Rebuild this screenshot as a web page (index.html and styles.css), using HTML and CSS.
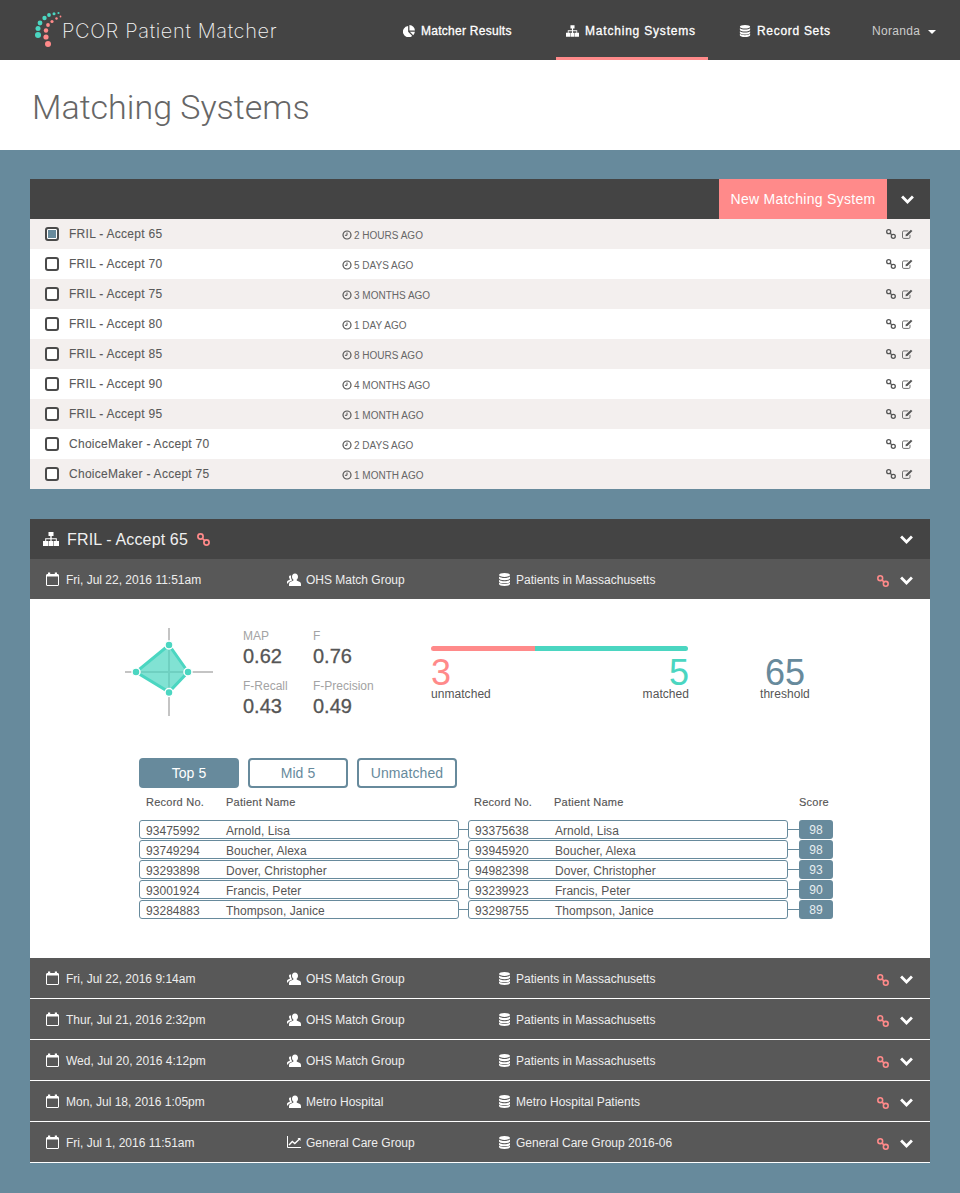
FILE: index.html
```html
<!DOCTYPE html>
<html lang="en">
<head>
<meta charset="utf-8">
<title>Matching Systems</title>
<link rel="stylesheet" href="styles.css">
</head>
<body>
<svg class="defs" width="0" height="0" aria-hidden="true">
  <symbol id="i-sitemap" viewBox="0 0 16 14"><path fill="currentColor" d="M5.500 0h5v4H8.700v2.200h5.100V9H16v5h-5V9h1.800V7.200H8.600V9h1.900v5h-5V9h1.900V7.200H3.200V9H5v5H0V9h2.200V6.200h5.100V4H5.500z"/></symbol>
  <symbol id="i-pie" viewBox="0 0 14 14"><path fill="currentColor" d="M6 1.200V8l4.800 4.800A6.600 6.600 0 1 1 6 1.200zM7.500 0a6.500 6.500 0 0 1 6.400 6.500H7.500zM8 8h5.900a6.400 6.400 0 0 1-2 3.900z"/></symbol>
  <symbol id="i-db" viewBox="0 0 12 14"><g fill="currentColor"><path d="M6 0c3.300 0 6 .9 6 2.100S9.300 4.200 6 4.200 0 3.300 0 2.100 2.700 0 6 0z"/><path d="M0 3.700C1 4.800 3.500 5.300 6 5.300s5-.5 6-1.600v1.900C12 6.800 9.300 7.700 6 7.700S0 6.800 0 5.600z"/><path d="M0 7.200C1 8.300 3.500 8.800 6 8.800s5-.5 6-1.600v1.900c0 1.200-2.700 2.100-6 2.100S0 10.300 0 9.100z"/><path d="M0 10.300c1 1.100 3.500 1.600 6 1.600s5-.5 6-1.600v1.600C12 13.100 9.300 14 6 14s-6-.9-6-2.100z"/></g></symbol>
  <symbol id="i-link" viewBox="0 0 13 13"><g fill="none" stroke="currentColor" stroke-width="1.700"><circle cx="3.500" cy="3.500" r="2.600"/><circle cx="9.500" cy="9.500" r="2.600"/><path d="M5.500 5.500l2 2"/></g></symbol>
  <symbol id="i-edit" viewBox="0 0 13 12"><g fill="none" stroke="currentColor" stroke-width="1"><path d="M9.500 7v2.800a1.500 1.500 0 0 1-1.500 1.500H2a1.500 1.500 0 0 1-1.500-1.500V3.800A1.500 1.500 0 0 1 2 2.300h5.500"/></g><path fill="currentColor" d="M4.500 6.500L10.600.8l1.800 1.700-6 5.800-2.300.4z"/></symbol>
  <symbol id="i-clock" viewBox="0 0 10 10"><circle cx="5" cy="5" r="4" fill="none" stroke="currentColor" stroke-width="1.200"/><path d="M5 2.500V5.300H2.900" fill="none" stroke="currentColor" stroke-width="1"/></symbol>
  <symbol id="i-cal" viewBox="0 0 13 14"><rect x=".5" y="2.500" width="12" height="11" rx=".5" fill="none" stroke="currentColor"/><path fill="currentColor" d="M0 3h13v1.500H0zM2 .5h2.200v3.500H2zM8.800 .5H11v3.500H8.800z"/></symbol>
  <symbol id="i-users" viewBox="0 0 14 13"><path fill="currentColor" d="M8 .5c1.900 0 3 1.400 3 3.200 0 1.300-.6 2.500-1.400 3.100 0 .7.300 1 1 1.300C12.300 8.700 14 9.200 14 11v2H2v-1.800c0-2 1.900-2.600 3.500-3.100.8-.3 1-.6 1-1.300C5.600 6.200 5 5 5 3.700 5 1.900 6.100.5 8 .5zM3.800 2.600c.2 0 .3 0 .4.100-.1.400-.2.700-.2 1 0 1.300.5 2.600 1.200 3.500-.2.500-.7.700-1.300.9C2.500 8.600 1.300 9.300 1 10.500H0V9c0-1.200 1.200-1.600 2.300-2 .5-.2.700-.4.700-.9-.6-.5-1-1.300-1-2.100 0-.9.600-1.400 1.800-1.400z"/></symbol>
  <symbol id="i-chart" viewBox="0 0 14 12"><path fill="none" stroke="currentColor" d="M.5 0v11.500H14"/><path fill="none" stroke="currentColor" stroke-width="1.400" d="M2 9l3.300-3.500 2.500 2L12.500 3"/><path fill="currentColor" d="M10.500 2H13.500V5z"/></symbol>
  <symbol id="i-chev" viewBox="0 0 12 8"><path fill="none" stroke="currentColor" stroke-width="2.600" d="M1 1.200l5 5 5-5"/></symbol>
</svg>

<header class="topbar">
  <a class="brand">
    <svg class="logo" viewBox="0 0 30 36" width="30" height="36">
      <g fill="#4bd6c1"><circle cx="4" cy="23" r="3"/><circle cx="4" cy="16.500" r="2.500"/><circle cx="6" cy="11" r="2.400"/><circle cx="10.500" cy="6" r="2.200"/><circle cx="15" cy="3" r="1.900"/><circle cx="20" cy="1.700" r="1.500"/><circle cx="24.500" cy="1" r="1.100"/></g>
      <g fill="#ff8a8a"><circle cx="14" cy="32" r="3"/><circle cx="12" cy="25" r="2.600"/><circle cx="12" cy="18.500" r="2.200"/><circle cx="14" cy="13" r="1.900"/><circle cx="18" cy="9.500" r="1.600"/><circle cx="22.500" cy="6.500" r="1.200"/><circle cx="26.500" cy="4.500" r=".9"/></g>
    </svg>
    <span class="brand-name">PCOR Patient Matcher</span>
  </a>
  <nav class="nav">
    <a class="nav-item nav-results"><svg class="ico-nav"><use href="#i-pie"/></svg>Matcher Results</a>
    <a class="nav-item nav-systems active"><svg class="ico-nav"><use href="#i-sitemap"/></svg>Matching Systems</a>
    <a class="nav-item nav-records"><svg class="ico-nav"><use href="#i-db"/></svg>Record Sets</a>
    <a class="nav-user">Noranda<span class="caret"></span></a>
  </nav>
</header>

<section class="titleband"><h1>Matching Systems</h1></section>

<main class="content">
  <section class="panel">
    <div class="panel-head list-head">
      <button class="new-btn">New Matching System</button>
      <span class="chev-box"><svg class="ico-chev"><use href="#i-chev"/></svg></span>
    </div>
    <ul class="syslist">
      <li class="sys"><span class="check on"></span><span class="sys-name">FRIL - Accept 65</span><span class="sys-time"><svg class="ico-clock"><use href="#i-clock"/></svg>2 HOURS AGO</span><span class="sys-actions"><svg class="ico-link"><use href="#i-link"/></svg><svg class="ico-edit"><use href="#i-edit"/></svg></span></li>
      <li class="sys"><span class="check"></span><span class="sys-name">FRIL - Accept 70</span><span class="sys-time"><svg class="ico-clock"><use href="#i-clock"/></svg>5 DAYS AGO</span><span class="sys-actions"><svg class="ico-link"><use href="#i-link"/></svg><svg class="ico-edit"><use href="#i-edit"/></svg></span></li>
      <li class="sys"><span class="check"></span><span class="sys-name">FRIL - Accept 75</span><span class="sys-time"><svg class="ico-clock"><use href="#i-clock"/></svg>3 MONTHS AGO</span><span class="sys-actions"><svg class="ico-link"><use href="#i-link"/></svg><svg class="ico-edit"><use href="#i-edit"/></svg></span></li>
      <li class="sys"><span class="check"></span><span class="sys-name">FRIL - Accept 80</span><span class="sys-time"><svg class="ico-clock"><use href="#i-clock"/></svg>1 DAY AGO</span><span class="sys-actions"><svg class="ico-link"><use href="#i-link"/></svg><svg class="ico-edit"><use href="#i-edit"/></svg></span></li>
      <li class="sys"><span class="check"></span><span class="sys-name">FRIL - Accept 85</span><span class="sys-time"><svg class="ico-clock"><use href="#i-clock"/></svg>8 HOURS AGO</span><span class="sys-actions"><svg class="ico-link"><use href="#i-link"/></svg><svg class="ico-edit"><use href="#i-edit"/></svg></span></li>
      <li class="sys"><span class="check"></span><span class="sys-name">FRIL - Accept 90</span><span class="sys-time"><svg class="ico-clock"><use href="#i-clock"/></svg>4 MONTHS AGO</span><span class="sys-actions"><svg class="ico-link"><use href="#i-link"/></svg><svg class="ico-edit"><use href="#i-edit"/></svg></span></li>
      <li class="sys"><span class="check"></span><span class="sys-name">FRIL - Accept 95</span><span class="sys-time"><svg class="ico-clock"><use href="#i-clock"/></svg>1 MONTH AGO</span><span class="sys-actions"><svg class="ico-link"><use href="#i-link"/></svg><svg class="ico-edit"><use href="#i-edit"/></svg></span></li>
      <li class="sys"><span class="check"></span><span class="sys-name">ChoiceMaker - Accept 70</span><span class="sys-time"><svg class="ico-clock"><use href="#i-clock"/></svg>2 DAYS AGO</span><span class="sys-actions"><svg class="ico-link"><use href="#i-link"/></svg><svg class="ico-edit"><use href="#i-edit"/></svg></span></li>
      <li class="sys"><span class="check"></span><span class="sys-name">ChoiceMaker - Accept 75</span><span class="sys-time"><svg class="ico-clock"><use href="#i-clock"/></svg>1 MONTH AGO</span><span class="sys-actions"><svg class="ico-link"><use href="#i-link"/></svg><svg class="ico-edit"><use href="#i-edit"/></svg></span></li>
    </ul>
  </section>

  <section class="panel">
    <div class="panel-head detail-head">
      <svg class="ico-head"><use href="#i-sitemap"/></svg>
      <span class="head-title">FRIL - Accept 65</span>
      <svg class="ico-head-link"><use href="#i-link"/></svg>
      <svg class="ico-chev head-chev"><use href="#i-chev"/></svg>
    </div>

    <div class="run">
      <span class="run-date"><svg class="ico-cal"><use href="#i-cal"/></svg>Fri, Jul 22, 2016 11:51am</span>
      <span class="run-group"><svg class="ico-users"><use href="#i-users"/></svg>OHS Match Group</span>
      <span class="run-set"><svg class="ico-db"><use href="#i-db"/></svg>Patients in Massachusetts</span>
      <svg class="ico-run-link"><use href="#i-link"/></svg>
      <svg class="ico-chev run-chev"><use href="#i-chev"/></svg>
    </div>

    <div class="detail">
      <div class="summary">
        <svg class="radar" viewBox="0 0 90 90" width="90" height="90">
          <g stroke="#c4c4c4" stroke-width="2" fill="none"><path d="M44 0V88M0 44H88"/></g>
          <path d="M44 17L63 44L44 64L11 44Z" fill="#4bd6c1" fill-opacity=".7" stroke="#4bd6c1" stroke-width="3"/>
          <g fill="#4bd6c1" stroke="#fff" stroke-width="1.500"><circle cx="44" cy="17" r="4"/><circle cx="63" cy="44" r="4"/><circle cx="44" cy="64.500" r="4"/><circle cx="11" cy="44" r="4"/></g>
        </svg>
        <div class="metrics">
          <div class="metric"><span class="m-label">MAP</span><span class="m-value">0.62</span></div>
          <div class="metric"><span class="m-label">F</span><span class="m-value">0.76</span></div>
          <div class="metric"><span class="m-label">F-Recall</span><span class="m-value">0.43</span></div>
          <div class="metric"><span class="m-label">F-Precision</span><span class="m-value">0.49</span></div>
        </div>
        <div class="matchbar">
          <div class="bar"><span class="bar-un"></span><span class="bar-ma"></span></div>
          <div class="bar-stats">
            <div class="stat"><span class="big un">3</span><span class="cap">unmatched</span></div>
            <div class="stat right"><span class="big ma">5</span><span class="cap">matched</span></div>
          </div>
        </div>
        <div class="stat threshold"><span class="big th">65</span><span class="cap">threshold</span></div>
      </div>

      <div class="tabs">
        <button class="tab active">Top 5</button>
        <button class="tab">Mid 5</button>
        <button class="tab">Unmatched</button>
      </div>

      <div class="thead">
        <span class="th-no">Record No.</span><span class="th-name">Patient Name</span>
        <span class="th-no2">Record No.</span><span class="th-name2">Patient Name</span>
        <span class="th-score">Score</span>
      </div>

      <div class="pairs">
        <div class="pair"><div class="rec"><span class="no">93475992</span><span>Arnold, Lisa</span></div><i class="wire"></i><div class="rec"><span class="no">93375638</span><span>Arnold, Lisa</span></div><i class="wire w2"></i><span class="score">98</span></div>
        <div class="pair"><div class="rec"><span class="no">93749294</span><span>Boucher, Alexa</span></div><i class="wire"></i><div class="rec"><span class="no">93945920</span><span>Boucher, Alexa</span></div><i class="wire w2"></i><span class="score">98</span></div>
        <div class="pair"><div class="rec"><span class="no">93293898</span><span>Dover, Christopher</span></div><i class="wire"></i><div class="rec"><span class="no">94982398</span><span>Dover, Christopher</span></div><i class="wire w2"></i><span class="score">93</span></div>
        <div class="pair"><div class="rec"><span class="no">93001924</span><span>Francis, Peter</span></div><i class="wire"></i><div class="rec"><span class="no">93239923</span><span>Francis, Peter</span></div><i class="wire w2"></i><span class="score">90</span></div>
        <div class="pair"><div class="rec"><span class="no">93284883</span><span>Thompson, Janice</span></div><i class="wire"></i><div class="rec"><span class="no">93298755</span><span>Thompson, Janice</span></div><i class="wire w2"></i><span class="score">89</span></div>
      </div>
    </div>

    <div class="run ruled">
      <span class="run-date"><svg class="ico-cal"><use href="#i-cal"/></svg>Fri, Jul 22, 2016 9:14am</span>
      <span class="run-group"><svg class="ico-users"><use href="#i-users"/></svg>OHS Match Group</span>
      <span class="run-set"><svg class="ico-db"><use href="#i-db"/></svg>Patients in Massachusetts</span>
      <svg class="ico-run-link"><use href="#i-link"/></svg>
      <svg class="ico-chev run-chev"><use href="#i-chev"/></svg>
    </div>
    <div class="run ruled">
      <span class="run-date"><svg class="ico-cal"><use href="#i-cal"/></svg>Thur, Jul 21, 2016 2:32pm</span>
      <span class="run-group"><svg class="ico-users"><use href="#i-users"/></svg>OHS Match Group</span>
      <span class="run-set"><svg class="ico-db"><use href="#i-db"/></svg>Patients in Massachusetts</span>
      <svg class="ico-run-link"><use href="#i-link"/></svg>
      <svg class="ico-chev run-chev"><use href="#i-chev"/></svg>
    </div>
    <div class="run ruled">
      <span class="run-date"><svg class="ico-cal"><use href="#i-cal"/></svg>Wed, Jul 20, 2016 4:12pm</span>
      <span class="run-group"><svg class="ico-users"><use href="#i-users"/></svg>OHS Match Group</span>
      <span class="run-set"><svg class="ico-db"><use href="#i-db"/></svg>Patients in Massachusetts</span>
      <svg class="ico-run-link"><use href="#i-link"/></svg>
      <svg class="ico-chev run-chev"><use href="#i-chev"/></svg>
    </div>
    <div class="run ruled">
      <span class="run-date"><svg class="ico-cal"><use href="#i-cal"/></svg>Mon, Jul 18, 2016 1:05pm</span>
      <span class="run-group"><svg class="ico-users"><use href="#i-users"/></svg>Metro Hospital</span>
      <span class="run-set"><svg class="ico-db"><use href="#i-db"/></svg>Metro Hospital Patients</span>
      <svg class="ico-run-link"><use href="#i-link"/></svg>
      <svg class="ico-chev run-chev"><use href="#i-chev"/></svg>
    </div>
    <div class="run ruled">
      <span class="run-date"><svg class="ico-cal"><use href="#i-cal"/></svg>Fri, Jul 1, 2016 11:51am</span>
      <span class="run-group"><svg class="ico-chart"><use href="#i-chart"/></svg>General Care Group</span>
      <span class="run-set"><svg class="ico-db"><use href="#i-db"/></svg>General Care Group 2016-06</span>
      <svg class="ico-run-link"><use href="#i-link"/></svg>
      <svg class="ico-chev run-chev"><use href="#i-chev"/></svg>
    </div>
  </section>
</main>
</body>
</html>
```
FILE: styles.css
```css
* { box-sizing: border-box; }
html, body { margin: 0; padding: 0; }
body {
  width: 960px;
  min-height: 1193px;
  background: #678a9c;
  color: #555;
  font-family: "Liberation Sans", Arial, sans-serif;
  font-size: 12px;
}
.defs { display: block; height: 0; }
svg { display: block; flex: none; }

/* top bar */
.topbar { height: 60px; background: #444; display: flex; align-items: stretch; padding-left: 32px; color: #fff; }
.brand { display: flex; align-items: flex-start; width: 363px; }
.logo { margin-top: 12px; margin-left: 2px; overflow: visible; }
.brand-name {
  margin-left: -2px; padding-top: 19px;
  font-family: Inter, sans-serif; font-weight: 200; font-size: 20px; line-height: 24px;
  letter-spacing: .65px; color: #f4f4f4; white-space: nowrap;
}
.nav { display: flex; align-items: stretch; }
.nav-item { display: flex; align-items: center; gap: 6px; font-size: 12px; color: #fff; letter-spacing: .7px; -webkit-text-stroke: .3px #fff; padding-top: 2px; }
.nav-results { width: 161px; padding-left: 8px; letter-spacing: .27px; }
.nav-systems { width: 152px; border-bottom: 3px solid #ff8a8a; padding-left: 10px; padding-top: 5px; letter-spacing: .8px; }
.nav-records { width: 164px; padding-left: 31px; }
.nav-user { display: flex; align-items: center; color: #ccc; font-size: 12px; letter-spacing: .3px; padding-top: 2px; }
.caret { width: 0; height: 0; margin-left: 8px; margin-top: 2px; border: 4px solid transparent; border-top-color: #fff; border-bottom-width: 0; }
.ico-nav { width: 12px; height: 12px; }
.nav-systems .ico-nav { width: 13px; height: 12px; }

/* title */
.titleband { height: 90px; background: #fff; padding: 25px 32px 0; }
h1 { margin: 0; font-family: Roboto, sans-serif; font-weight: 300; font-size: 34px; line-height: 44px; color: #666; white-space: nowrap; }

/* content */
.content { padding: 29px 30px 30px; display: flex; flex-direction: column; gap: 30px; }
.panel { display: flex; flex-direction: column; }
.panel-head { height: 40px; background: #444; display: flex; align-items: center; color: #fff; }
.list-head { justify-content: flex-end; }
.new-btn {
  height: 40px; width: 168px; border: 0; padding: 0; background: #ff8a8a; color: #fff;
  font: 14px "Liberation Sans", Arial, sans-serif; letter-spacing: .3px;
}
.chev-box { width: 43px; display: flex; justify-content: center; padding-right: 2px; }
.ico-chev { width: 13px; height: 9px; color: #fff; }

/* system list */
.syslist { list-style: none; margin: 0; padding: 0; }
.sys { height: 30px; display: flex; align-items: center; background: #fff; padding-left: 15px; color: #555; }
.sys:nth-child(odd) { background: #f3efee; }
.check { width: 14px; height: 14px; border: 2px solid #4a4a4a; border-radius: 3px; background: #fff; }
.check.on { background: #678a9c; box-shadow: inset 0 0 0 1px #fff; }
.sys-name { margin-left: 10px; width: 273px; letter-spacing: .28px; color: #5a5a5a; -webkit-text-stroke: .1px #5a5a5a; }
.sys-time { display: flex; align-items: center; gap: 2px; font-size: 10px; color: #666; margin-top: 3px; width: 400px; }
.ico-clock { width: 10px; height: 10px; color: #555; margin-top: -2px; }
.sys-actions { margin-left: auto; display: flex; align-items: center; gap: 6px; padding-right: 17px; color: #555; margin-top: -1px; }
.ico-link { width: 10px; height: 10px; }
.ico-edit { width: 11px; height: 10px; }

/* detail head */
.detail-head { padding-left: 13px; }
.ico-head { width: 16px; height: 14px; }
.head-title { margin-left: 8px; margin-top: 2px; font-size: 16px; color: #f0f0f0; letter-spacing: .15px; }
.ico-head-link { width: 13px; height: 13px; margin-left: 9px; color: #ff8a8a; }
.head-chev { margin-left: auto; margin-right: 17px; }

/* runs */
.run { height: 40px; background: #585858; display: flex; align-items: center; color: #eee; font-size: 12px; letter-spacing: 0; padding-left: 16px; padding-top: 2px; }
.ruled { height: 41px; border-bottom: 1px solid #fff; }
.run-date { width: 241px; display: flex; align-items: center; gap: 7px; }
.run-group { width: 212px; display: flex; align-items: center; gap: 5px; }
.run-set { width: 378px; display: flex; align-items: center; gap: 6px; }
.ico-cal { width: 13px; height: 14px; color: #fff; margin-top: -3px; }
.ico-users { width: 14px; height: 13px; color: #fff; margin-top: -2px; }
.ico-chart { width: 14px; height: 12px; color: #fff; margin-top: -2px; }
.ico-db { width: 11px; height: 13px; color: #fff; margin-top: -2px; }
.ico-run-link { width: 12px; height: 12px; color: #ff8a8a; margin-top: 1px; }
.run-chev { margin-left: 11px; }

/* detail */
.detail { height: 359px; background: #fff; padding: 28px 0 0 95px; }
.summary { display: flex; align-items: flex-start; }
.radar { width: 90px; height: 90px; margin-top: 1px; }
.metrics { display: grid; grid-template-columns: 70px 100px; grid-auto-rows: 50px; margin-left: 28px; margin-top: 2px; }
.metric { display: flex; flex-direction: column; }
.m-label { font-size: 12px; line-height: 14px; color: #a3a3a3; }
.m-value { font-size: 20px; line-height: 26px; color: #555; -webkit-text-stroke: .3px #555; }
.matchbar { width: 257px; margin-left: 18px; margin-top: 19px; }
.bar { display: flex; height: 5px; border-radius: 3px; overflow: hidden; }
.bar-un { width: 104px; background: #ff8a8a; }
.bar-ma { flex: 1; background: #4bd6c1; }
.bar-stats { display: flex; justify-content: space-between; margin-top: 3px; }
.stat { display: flex; flex-direction: column; align-items: flex-start; }
.stat.right { align-items: flex-end; margin-right: -1px; }
.big { font-size: 36px; line-height: 34px; padding-top: 2px; height: 33px; }
.un { color: #ff8a8a; }
.ma { color: #4bd6c1; }
.th { color: #678a9c; }
.cap { font-size: 12px; line-height: 14px; color: #555; letter-spacing: .05px; }
.threshold { align-items: center; margin-left: 72px; margin-top: 27px; }

.tabs { display: flex; gap: 9px; margin-top: 29px; margin-left: 14px; }
.tab {
  width: 100px; height: 30px; padding: 0; border: 2px solid #678a9c; border-radius: 4px;
  background: #fff; color: #678a9c; font: 14px "Liberation Sans", Arial, sans-serif; letter-spacing: .1px;
}
.tab.active { background: #678a9c; color: #fff; }

.thead { display: flex; margin-top: 6px; margin-left: 14px; height: 16px; align-items: center; font-size: 11px; letter-spacing: .25px; color: #555; -webkit-text-stroke: .15px #555; }
.th-no { margin-left: 7px; width: 80px; }
.th-name { width: 248px; }
.th-no2 { width: 80px; }
.th-name2 { width: 245px; }

.pairs { display: flex; flex-direction: column; gap: 1px; margin: 10px 0 0 14px; }
.pair { display: flex; align-items: center; height: 19px; }
.rec { width: 320px; height: 19px; display: flex; align-items: center; padding: 2px 0 0 6px; border: 1px solid #678a9c; border-radius: 3px; font-size: 12px; color: #555; letter-spacing: .04px; }
.no { width: 80px; }
.wire { width: 9px; height: 1px; background: #678a9c; }
.w2 { width: 11px; }
.score { width: 34px; height: 19px; display: flex; align-items: center; justify-content: center; padding-top: 1px; border-radius: 3px; background: #678a9c; color: #e8eef1; font-size: 12px; }
```
